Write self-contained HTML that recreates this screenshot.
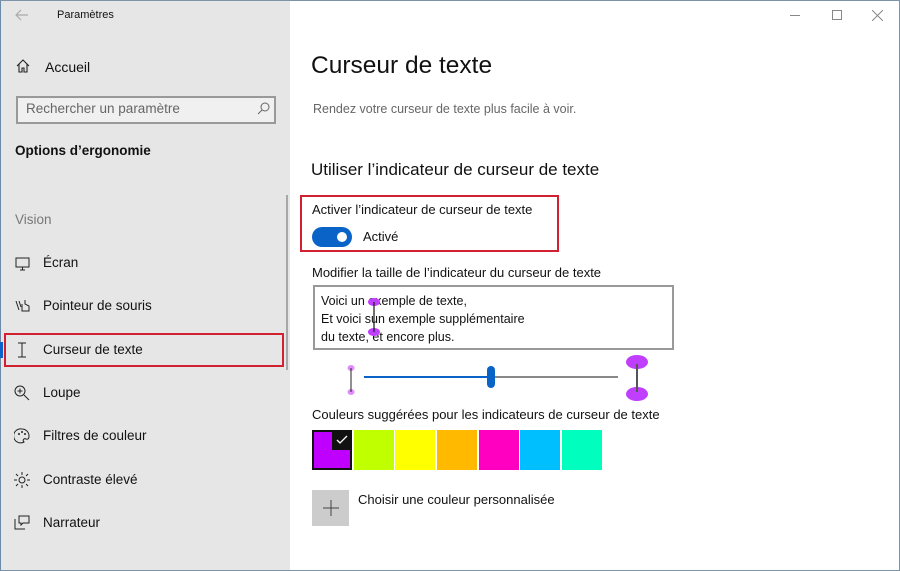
<!DOCTYPE html>
<html><head><meta charset="utf-8"><style>
*{margin:0;padding:0;box-sizing:border-box}
body{width:900px;height:571px;overflow:hidden;font-family:"Liberation Sans",sans-serif;background:#fff;position:relative;color:#000}
.a{position:absolute;white-space:nowrap}
#side{position:absolute;left:0;top:0;width:290px;height:571px;background:#e6e6e6;border-left:1px solid #6a8aa8;border-bottom:1px solid #6a8aa8}
.nav{font-size:13.5px;color:#111}
.ic{position:absolute;left:15px;width:16px;height:16px}
</style></head><body>
<div id="side"></div>
<div style="position:absolute;left:0;top:0;width:900px;height:1px;background:#7d93a8"></div>
<div style="position:absolute;right:0;top:0;width:1px;height:571px;background:#7d93a8"></div>
<div style="position:absolute;left:0;bottom:0;width:900px;height:1px;background:#7d93a8"></div>
<svg class="a" style="left:15px;top:9px" width="14" height="12"><path d="M13 6H2M6 1L1 6l5 5" stroke="#aaa" fill="none" stroke-width="1.2"/></svg>
<div class="a" style="left:57px;top:9px;font-size:11px;color:#111">Paramètres</div>
<svg class="a" style="left:16px;top:59px" width="14" height="14"><path d="M1 7L7 1l6 6M3 5v8h3V9h2v4h3V5" stroke="#222" fill="none" stroke-width="1.1"/></svg>
<div class="a nav" style="left:45px;top:59px;font-size:14px">Accueil</div>
<div class="a" style="left:16px;top:96px;width:260px;height:28px;border:2px solid #999;background:#f0f0f0"></div>
<div class="a" style="left:26px;top:101px;font-size:13.5px;color:#666">Rechercher un paramètre</div>
<svg class="a" style="left:257px;top:102px" width="13" height="13"><circle cx="8" cy="5" r="4" stroke="#666" fill="none"/><path d="M5 8L1 12" stroke="#666"/></svg>
<div class="a" style="left:15px;top:143px;font-size:13.5px;font-weight:bold;color:#111">Options d’ergonomie</div>
<div class="a" style="left:15px;top:212px;font-size:13.5px;color:#777">Vision</div>
<div style="position:absolute;left:286px;top:195px;width:2px;height:175px;background:#a8a8a8"></div>
<svg class="a" style="left:15px;top:257px" width="16" height="14"><rect x="1" y="1" width="13" height="9" stroke="#222" fill="none"/><path d="M5 13h5M7.5 10v3" stroke="#222"/></svg>
<div class="a nav" style="left:43px;top:255px">Écran</div>
<svg class="a" style="left:14px;top:298px" width="18" height="16"><path d="M2 3l3 9M5 3l2 6M8 6v7h7V8l-4-2V2" stroke="#222" fill="none"/></svg>
<div class="a nav" style="left:43px;top:298px">Pointeur de souris</div>
<div class="a" style="left:4px;top:333px;width:280px;height:34px;border:2px solid #d1202f"></div>
<div style="position:absolute;left:0;top:342px;width:3px;height:16px;background:#0a64c8"></div>
<svg class="a" style="left:17px;top:342px" width="10" height="16"><path d="M1 1h8M1 15h8M5 1v14" stroke="#222"/></svg>
<div class="a nav" style="left:43px;top:342px">Curseur de texte</div>
<svg class="a" style="left:14px;top:385px" width="16" height="16"><circle cx="6" cy="6" r="5" stroke="#222" fill="none"/><path d="M6 3.5v5M3.5 6h5M10 10l5 5" stroke="#222"/></svg>
<div class="a nav" style="left:43px;top:385px">Loupe</div>
<svg class="a" style="left:14px;top:428px" width="16" height="16"><path d="M8 1a7 7 0 1 0 2 13c-2-2 0-4 2-3 3 1 3-2 3-3A7 7 0 0 0 8 1z" stroke="#222" fill="none"/><circle cx="5" cy="6" r="1" fill="#222"/><circle cx="8" cy="4" r="1" fill="#222"/><circle cx="11" cy="6" r="1" fill="#222"/></svg>
<div class="a nav" style="left:43px;top:428px">Filtres de couleur</div>
<svg class="a" style="left:14px;top:472px" width="16" height="16"><circle cx="8" cy="8" r="3" stroke="#222" fill="none"/><path d="M8 0v3M8 13v3M0 8h3M13 8h3M2 2l2 2M12 12l2 2M2 14l2-2M12 4l2-2" stroke="#222"/></svg>
<div class="a nav" style="left:43px;top:472px">Contraste élevé</div>
<svg class="a" style="left:14px;top:515px" width="16" height="16"><path d="M1 4v10h10M5 1h10v7H9l-2 2V8H5z" stroke="#222" fill="none"/></svg>
<div class="a nav" style="left:43px;top:515px">Narrateur</div>

<div class="a" style="left:790px;top:15px;width:10px;height:1px;background:#888"></div>
<div class="a" style="left:832px;top:10px;width:10px;height:10px;border:1px solid #888"></div>
<svg class="a" style="left:872px;top:10px" width="11" height="11"><path d="M0 0l11 11M11 0L0 11" stroke="#888"/></svg>

<div class="a" style="left:311px;top:52px;font-size:24.5px;color:#111">Curseur de texte</div>
<div class="a" style="left:313px;top:102px;font-size:12.5px;color:#666">Rendez votre curseur de texte plus facile à voir.</div>
<div class="a" style="left:311px;top:160px;font-size:17px;color:#111">Utiliser l’indicateur de curseur de texte</div>
<div class="a" style="left:300px;top:195px;width:259px;height:57px;border:2px solid #d1202f"></div>
<div class="a" style="left:312px;top:202px;font-size:13px;color:#111">Activer l’indicateur de curseur de texte</div>
<div class="a" style="left:312px;top:227px;width:40px;height:20px;border-radius:10px;background:#0a64c8"></div>
<div class="a" style="left:337px;top:232px;width:10px;height:10px;border-radius:5px;background:#fff"></div>
<div class="a" style="left:363px;top:229px;font-size:13px;color:#111">Activé</div>
<div class="a" style="left:312px;top:265px;font-size:13px;color:#111">Modifier la taille de l’indicateur du curseur de texte</div>
<div class="a" style="left:313px;top:285px;width:361px;height:65px;border:2px solid #999"></div>
<div class="a" style="left:321px;top:292px;font-size:12.5px;line-height:18px;color:#111">Voici un exemple de texte,<br>Et voici sun exemple supplémentaire<br>du texte, et encore plus.</div>
<svg class="a" style="left:364px;top:296px" width="20" height="42"><ellipse cx="10" cy="6" rx="6" ry="4" fill="#c03fff"/><ellipse cx="10" cy="36" rx="6" ry="4" fill="#c03fff"/><path d="M10 6v30" stroke="#222" stroke-width="1.3"/></svg>
<svg class="a" style="left:344px;top:364px" width="14" height="32"><ellipse cx="7" cy="4" rx="3.5" ry="3" fill="#e08cff"/><ellipse cx="7" cy="28" rx="3.5" ry="3" fill="#e08cff"/><path d="M7 4v24" stroke="#222"/></svg>
<div class="a" style="left:364px;top:376px;width:126px;height:2px;background:#0a64c8"></div>
<div class="a" style="left:490px;top:376px;width:128px;height:2px;background:#888"></div>
<div class="a" style="left:487px;top:366px;width:8px;height:22px;border-radius:4px;background:#0a64c8"></div>
<svg class="a" style="left:622px;top:354px" width="30" height="48"><ellipse cx="15" cy="8" rx="11" ry="7" fill="#c03fff"/><ellipse cx="15" cy="40" rx="11" ry="7" fill="#c03fff"/><path d="M15 10v28" stroke="#555" stroke-width="2"/></svg>
<div class="a" style="left:312px;top:407px;font-size:13px;color:#111">Couleurs suggérées pour les indicateurs de curseur de texte</div>
<div class="a" style="left:312px;top:430px;width:40px;height:40px;background:#c000ff;border:2px solid #111"></div>
<div class="a" style="left:332px;top:430px;width:20px;height:20px;background:#111"></div>
<svg class="a" style="left:335px;top:434px" width="14" height="11"><path d="M2 6l3 3 7-7" stroke="#fff" fill="none" stroke-width="1.3"/></svg>
<div class="a" style="left:354px;top:430px;width:40px;height:40px;background:#bfff00"></div>
<div class="a" style="left:395px;top:430px;width:40px;height:40px;background:#ffff00"></div>
<div class="a" style="left:437px;top:430px;width:40px;height:40px;background:#ffba00"></div>
<div class="a" style="left:479px;top:430px;width:40px;height:40px;background:#ff00c0"></div>
<div class="a" style="left:520px;top:430px;width:40px;height:40px;background:#00bfff"></div>
<div class="a" style="left:562px;top:430px;width:40px;height:40px;background:#00ffbf"></div>
<div class="a" style="left:312px;top:490px;width:37px;height:36px;background:#ccc"></div>
<svg class="a" style="left:322px;top:499px" width="18" height="18"><path d="M9 1v16M1 9h16" stroke="#444"/></svg>
<div class="a" style="left:358px;top:492px;font-size:13px;color:#111">Choisir une couleur personnalisée</div>
</body></html>
